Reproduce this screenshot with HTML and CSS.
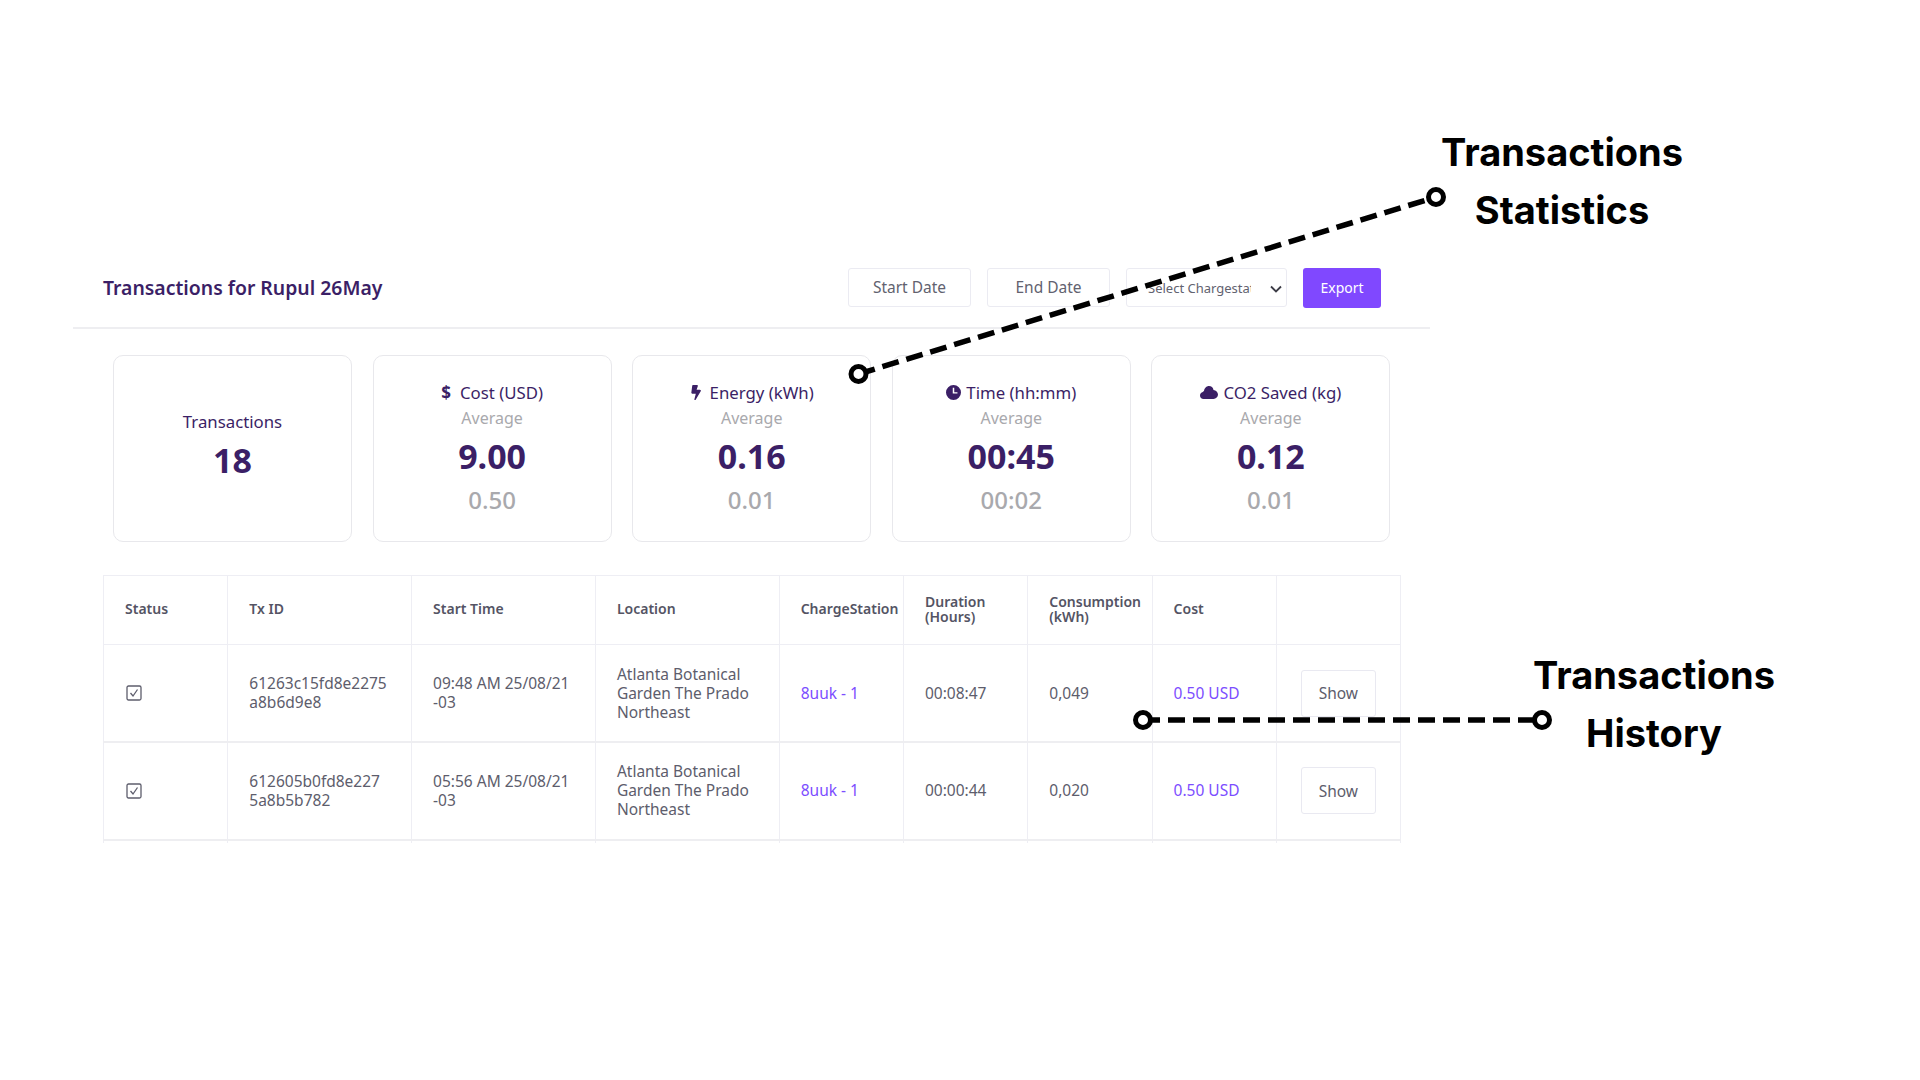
FILE: index.html
```html
<!DOCTYPE html>
<html lang="en">
<head>
<meta charset="utf-8">
<title>Transactions</title>
<link rel="stylesheet" href="styles.css">
</head>
<body>
<main class="page">
  <section class="panel">
    <header class="head">
      <h1 class="title">Transactions for Rupul 26May</h1>
      <div class="controls">
        <button class="ctl date">Start Date</button>
        <button class="ctl date">End Date</button>
        <div class="pick-wrap">
          <select class="ctl pick"><option>Select Chargestation</option></select>
          <svg class="chev" viewBox="0 0 12 8"><path d="M1 1.500l5 5 5-5"/></svg>
        </div>
        <button class="export">Export</button>
      </div>
    </header>
    <div class="stats">
      <div class="card first">
        <div class="label">Transactions</div>
        <div class="value">18</div>
      </div>
      <div class="card">
        <div class="label"><span class="dollar">$</span>Cost (USD)</div>
        <div class="avg">Average</div>
        <div class="value">9.00</div>
        <div class="sub">0.50</div>
      </div>
      <div class="card">
        <div class="label"><svg class="ico bolt" viewBox="0 0 320 512"><path d="M296 160H180.6l42.6-129.8C227.2 15 215.7 0 200 0H56C44 0 34 8.9 32.2 20.8l-32 240C-2.7 278.2 11.2 295 29.8 295h123.4l-47.9 194.3c-3.8 15.2 7.8 29.7 23.3 29.7 8.4 0 16.4-4.4 20.8-12l176-304c9.3-15.9-2.2-36-20.7-36z"/></svg>Energy (kWh)</div>
        <div class="avg">Average</div>
        <div class="value">0.16</div>
        <div class="sub">0.01</div>
      </div>
      <div class="card">
        <div class="label"><svg class="ico" viewBox="0 0 16 16"><path fill-rule="evenodd" d="M8 0a8 8 0 1 1 0 16A8 8 0 0 1 8 0zM7.200 3v6h5V7.600H8.800V3z"/></svg>Time (hh:mm)</div>
        <div class="avg">Average</div>
        <div class="value">00:45</div>
        <div class="sub">00:02</div>
      </div>
      <div class="card">
        <div class="label"><svg class="ico cloud" viewBox="0 0 18 13"><path d="M9 0c2.300 0 4.200 1.700 4.500 3.900 2.500.2 4.500 2.300 4.500 4.700C18 11 16 13 13.500 13h-10C1.500 13 0 11.500 0 9.500c0-1.700 1.200-3.100 2.800-3.400C3 5.700 3.300 5.300 4 5 4.300 2.200 6.400 0 9 0z"/></svg>CO2 Saved (kg)</div>
        <div class="avg">Average</div>
        <div class="value">0.12</div>
        <div class="sub">0.01</div>
      </div>
    </div>
    <div class="table-wrap">
      <table class="tx">
        <colgroup>
          <col class="c-s"><col class="c-l"><col class="c-l"><col class="c-l"><col class="c-s"><col class="c-s"><col class="c-s"><col class="c-s"><col class="c-s">
        </colgroup>
        <thead>
          <tr>
            <th>Status</th><th>Tx ID</th><th>Start Time</th><th>Location</th><th>ChargeStation</th>
            <th class="two">Duration<br>(Hours)</th><th class="two">Consumption<br>(kWh)</th><th>Cost</th><th></th>
          </tr>
        </thead>
        <tbody>
          <tr>
            <td><svg class="check" viewBox="0 0 16 16"><rect x="1" y="1" width="14" height="14" rx="1.500"/><path d="M4.500 8l2.500 3 4.500-6.500"/></svg></td>
            <td>61263c15fd8e2275<br>a8b6d9e8</td>
            <td>09:48 AM 25/08/21<br>-03</td>
            <td>Atlanta Botanical<br>Garden The Prado<br>Northeast</td>
            <td class="link">8uuk - 1</td>
            <td>00:08:47</td>
            <td>0,049</td>
            <td class="link">0.50 USD</td>
            <td class="act"><button class="show">Show</button></td>
          </tr>
          <tr>
            <td><svg class="check" viewBox="0 0 16 16"><rect x="1" y="1" width="14" height="14" rx="1.500"/><path d="M4.500 8l2.500 3 4.500-6.500"/></svg></td>
            <td>612605b0fd8e227<br>5a8b5b782</td>
            <td>05:56 AM 25/08/21<br>-03</td>
            <td>Atlanta Botanical<br>Garden The Prado<br>Northeast</td>
            <td class="link">8uuk - 1</td>
            <td>00:00:44</td>
            <td>0,020</td>
            <td class="link">0.50 USD</td>
            <td class="act"><button class="show">Show</button></td>
          </tr>
          <tr><td></td><td></td><td></td><td></td><td></td><td></td><td></td><td></td><td></td></tr>
        </tbody>
      </table>
    </div>
  </section>
  <svg class="callouts" viewBox="0 0 1920 1080" aria-hidden="true">
    <line class="dash" x1="858.500" y1="374" x2="1436" y2="197"/>
    <circle class="dot" cx="858.500" cy="374" r="7.500"/>
    <circle class="dot" cx="1436" cy="197" r="7.500"/>
    <line class="dash" x1="1143" y1="720" x2="1542" y2="720"/>
    <circle class="dot" cx="1143" cy="720" r="7.500"/>
    <circle class="dot" cx="1542" cy="720" r="7.500"/>
  </svg>
  <div class="note note-stats">Transactions<br>Statistics</div>
  <div class="note note-history">Transactions<br>History</div>
</main>
</body>
</html>
```
FILE: styles.css
```css
* { box-sizing: border-box; }
html, body { margin: 0; padding: 0; background: #fff; }
body { font-family: "Noto Sans", "Open Sans", sans-serif; color: #3b1f66; }
.page { position: relative; width: 1920px; height: 1080px; padding: 267px 0 0 73px; overflow: hidden; }
.panel { width: 1357px; }
.head { display: flex; align-items: center; justify-content: space-between; height: 62px; padding: 2px 49px 21px 30px; border-bottom: 2px solid #eeeef1; }
.title { margin: 0; font-size: 19.400px; font-weight: 600; color: #3b1f66; line-height: 39px; }
.controls { display: flex; align-items: center; gap: 16px; }
.ctl { height: 39px; background: #fff; border: 1px solid #ebebf2; border-radius: 3px; color: #62626f; font-family: inherit; }
.date { width: 123px; font-size: 15.500px; padding: 0 0 1px; }
.pick-wrap { position: relative; display: flex; }
.pick { width: 161px; font-size: 13px; padding: 0 35px 0 21px; appearance: none; }
.chev { position: absolute; right: 5px; top: 17px; width: 12px; height: 8px; fill: none; stroke: #3c3c46; stroke-width: 1.800; }
.export { width: 78px; height: 40px; background: #8048ff; border: 0; border-radius: 3px; color: #fff; font-family: inherit; font-size: 14px; padding: 0; }
.stats { display: grid; grid-template-columns: repeat(5, 239px); gap: 20.600px; margin: 26px 0 0 40px; }
.card { height: 187px; border: 1px solid #e8e8ec; border-radius: 10px; display: flex; flex-direction: column; align-items: center; justify-content: center; }
.card.first { padding-bottom: 2px; }
.label { display: flex; align-items: center; font-size: 16.800px; line-height: 26px; color: #3b1f66; }
.dollar { font-weight: 700; font-size: 17px; margin-right: 9px; }
.ico { width: 15px; height: 15px; margin-right: 5px; fill: #3b1f66; }
.bolt { width: 12px; margin-right: 8px; }
.cloud { width: 18px; height: 13px; margin-right: 5px; }
.avg { font-size: 16px; line-height: 25px; color: #a9a9ad; }
.value { font-size: 34px; font-weight: 700; line-height: 51px; color: #3b1f66; }
.sub { font-size: 24px; font-weight: 500; line-height: 36px; color: #a9a9ad; }
.table-wrap { margin: 33px 0 0 30px; width: 1300px; height: 268px; overflow: hidden; }
.tx { border-collapse: collapse; table-layout: fixed; width: 1297.600px; color: #5d5d6c; }
.c-s { width: 124.300px; }
.c-l { width: 183.800px; }
.tx th, .tx td { border: 1px solid #eeeef4; padding: 0 0 0 21px; text-align: left; white-space: nowrap; vertical-align: middle; }
.tx th { height: 69px; font-size: 14px; font-weight: 600; color: #545464; padding-bottom: 4px; }
.tx th.two { line-height: 15px; padding-bottom: 2px; }
.tx td { height: 97.500px; font-size: 15.500px; line-height: 19px; }
.tx tbody tr { border-bottom: 2px solid #eeeef1; }
.tx td.link { color: #7c4dff; }
.tx td.act { padding: 0 0 0 24px; }
.check { display: block; width: 16px; height: 18px; margin-left: 1px; fill: none; stroke: #5d5d6c; stroke-width: 1.300; }
.show { width: 75px; height: 47px; background: #fff; border: 1px solid #e9e9f1; border-radius: 3px; font-family: inherit; font-size: 15.500px; color: #5d5d6c; padding: 0; }
.callouts { position: absolute; left: 0; top: 0; width: 1920px; height: 1080px; pointer-events: none; }
.dash { stroke: #000; stroke-width: 5.500; stroke-dasharray: 17 8; }
.dot { fill: #fff; stroke: #000; stroke-width: 5; }
.note { position: absolute; width: 320px; text-align: center; font-family: Inter, "Liberation Sans", sans-serif; font-weight: 700; font-size: 38px; line-height: 58px; color: #000; }
.note-stats { left: 1402px; top: 123px; }
.note-history { left: 1494px; top: 646px; }
```
